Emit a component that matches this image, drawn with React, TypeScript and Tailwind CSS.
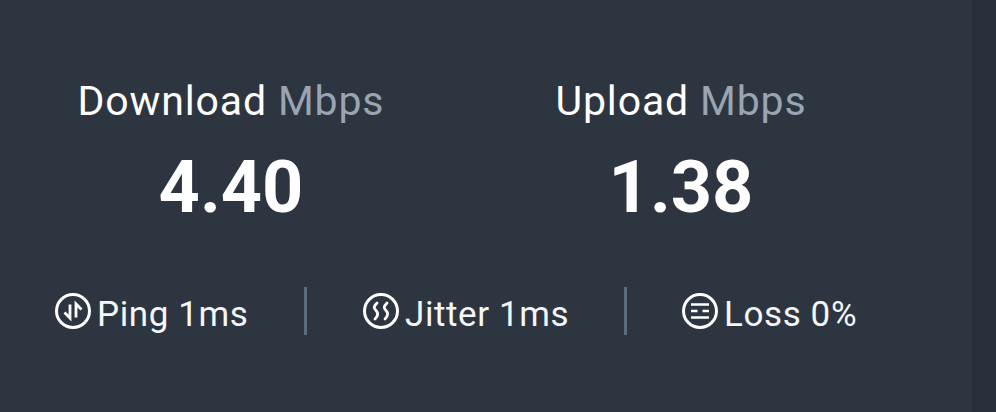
import React from "react";

const PingIcon = () => (
  <svg width="36" height="36" viewBox="0 0 36 36" fill="none" stroke="white" strokeWidth="3">
    <circle cx="18" cy="18" r="16.5" />
    <path d="M15 11.5V25L9.5 19.5" strokeWidth="2.8" />
    <path d="M21 24.5V11L26.5 16.5" strokeWidth="2.8" />
  </svg>
);

const JitterIcon = () => (
  <svg width="36" height="36" viewBox="0 0 36 36" fill="none" stroke="white" strokeWidth="3">
    <circle cx="18" cy="18" r="16.5" />
    <path d="M14 10C10.5 13.5 10.5 15 13 17.5C15.5 20 15.5 22.5 12 26" strokeWidth="2.8" strokeLinecap="round" />
    <path d="M24 10C20.5 13.5 20.5 15 23 17.5C25.5 20 25.5 22.5 22 26" strokeWidth="2.8" strokeLinecap="round" />
  </svg>
);

const LossIcon = () => (
  <svg width="36" height="36" viewBox="0 0 36 36" fill="none" stroke="white" strokeWidth="3">
    <circle cx="18" cy="18" r="16.5" />
    <path d="M9 11.5H27M9 18H15.5M20.5 18H27M9 24.5H27" strokeWidth="2.6" />
  </svg>
);

const speeds = [
  { label: "Download", value: "4.40" },
  { label: "Upload", value: "1.38" },
];

const App = () => {
  return (
    <div className="flex w-[996px] h-[412px] overflow-hidden bg-[#2d3540] text-white font-['Roboto',sans-serif]">
      <div className="w-[972px] pt-[75px]">
        <div className="grid grid-cols-2 w-[900px] ml-[6px]">
          {speeds.map((s) => (
            <div key={s.label} className="flex flex-col items-center">
              <div className="text-[41px] leading-[52px] tracking-[0.85px] whitespace-nowrap">
                {s.label} <span className="text-[#9aa4b2]">Mbps</span>
              </div>
              <div className="mt-[21px] text-[72px] leading-[80px] font-bold">{s.value}</div>
            </div>
          ))}
        </div>
        <div className="flex items-center mt-[59px] ml-[55px] h-[48px] text-[35px] text-[#f4f6f8] tracking-[0.6px] whitespace-nowrap">
          <div className="flex items-center gap-[6px] w-[249px]">
            <PingIcon />
            <span className="pt-[8px]">Ping 1ms</span>
          </div>
          <div className="w-[3px] h-[48px] bg-[#5c6b80]" />
          <div className="flex items-center gap-[6px] w-[261px] ml-[56px]">
            <JitterIcon />
            <span className="pt-[8px]">Jitter 1ms</span>
          </div>
          <div className="w-[3px] h-[48px] bg-[#5c6b80]" />
          <div className="flex items-center gap-[6px] ml-[55px]">
            <LossIcon />
            <span className="pt-[8px]">Loss 0%</span>
          </div>
        </div>
      </div>
      <div className="flex-1 bg-[#29303b]" />
    </div>
  );
};

export default App;
